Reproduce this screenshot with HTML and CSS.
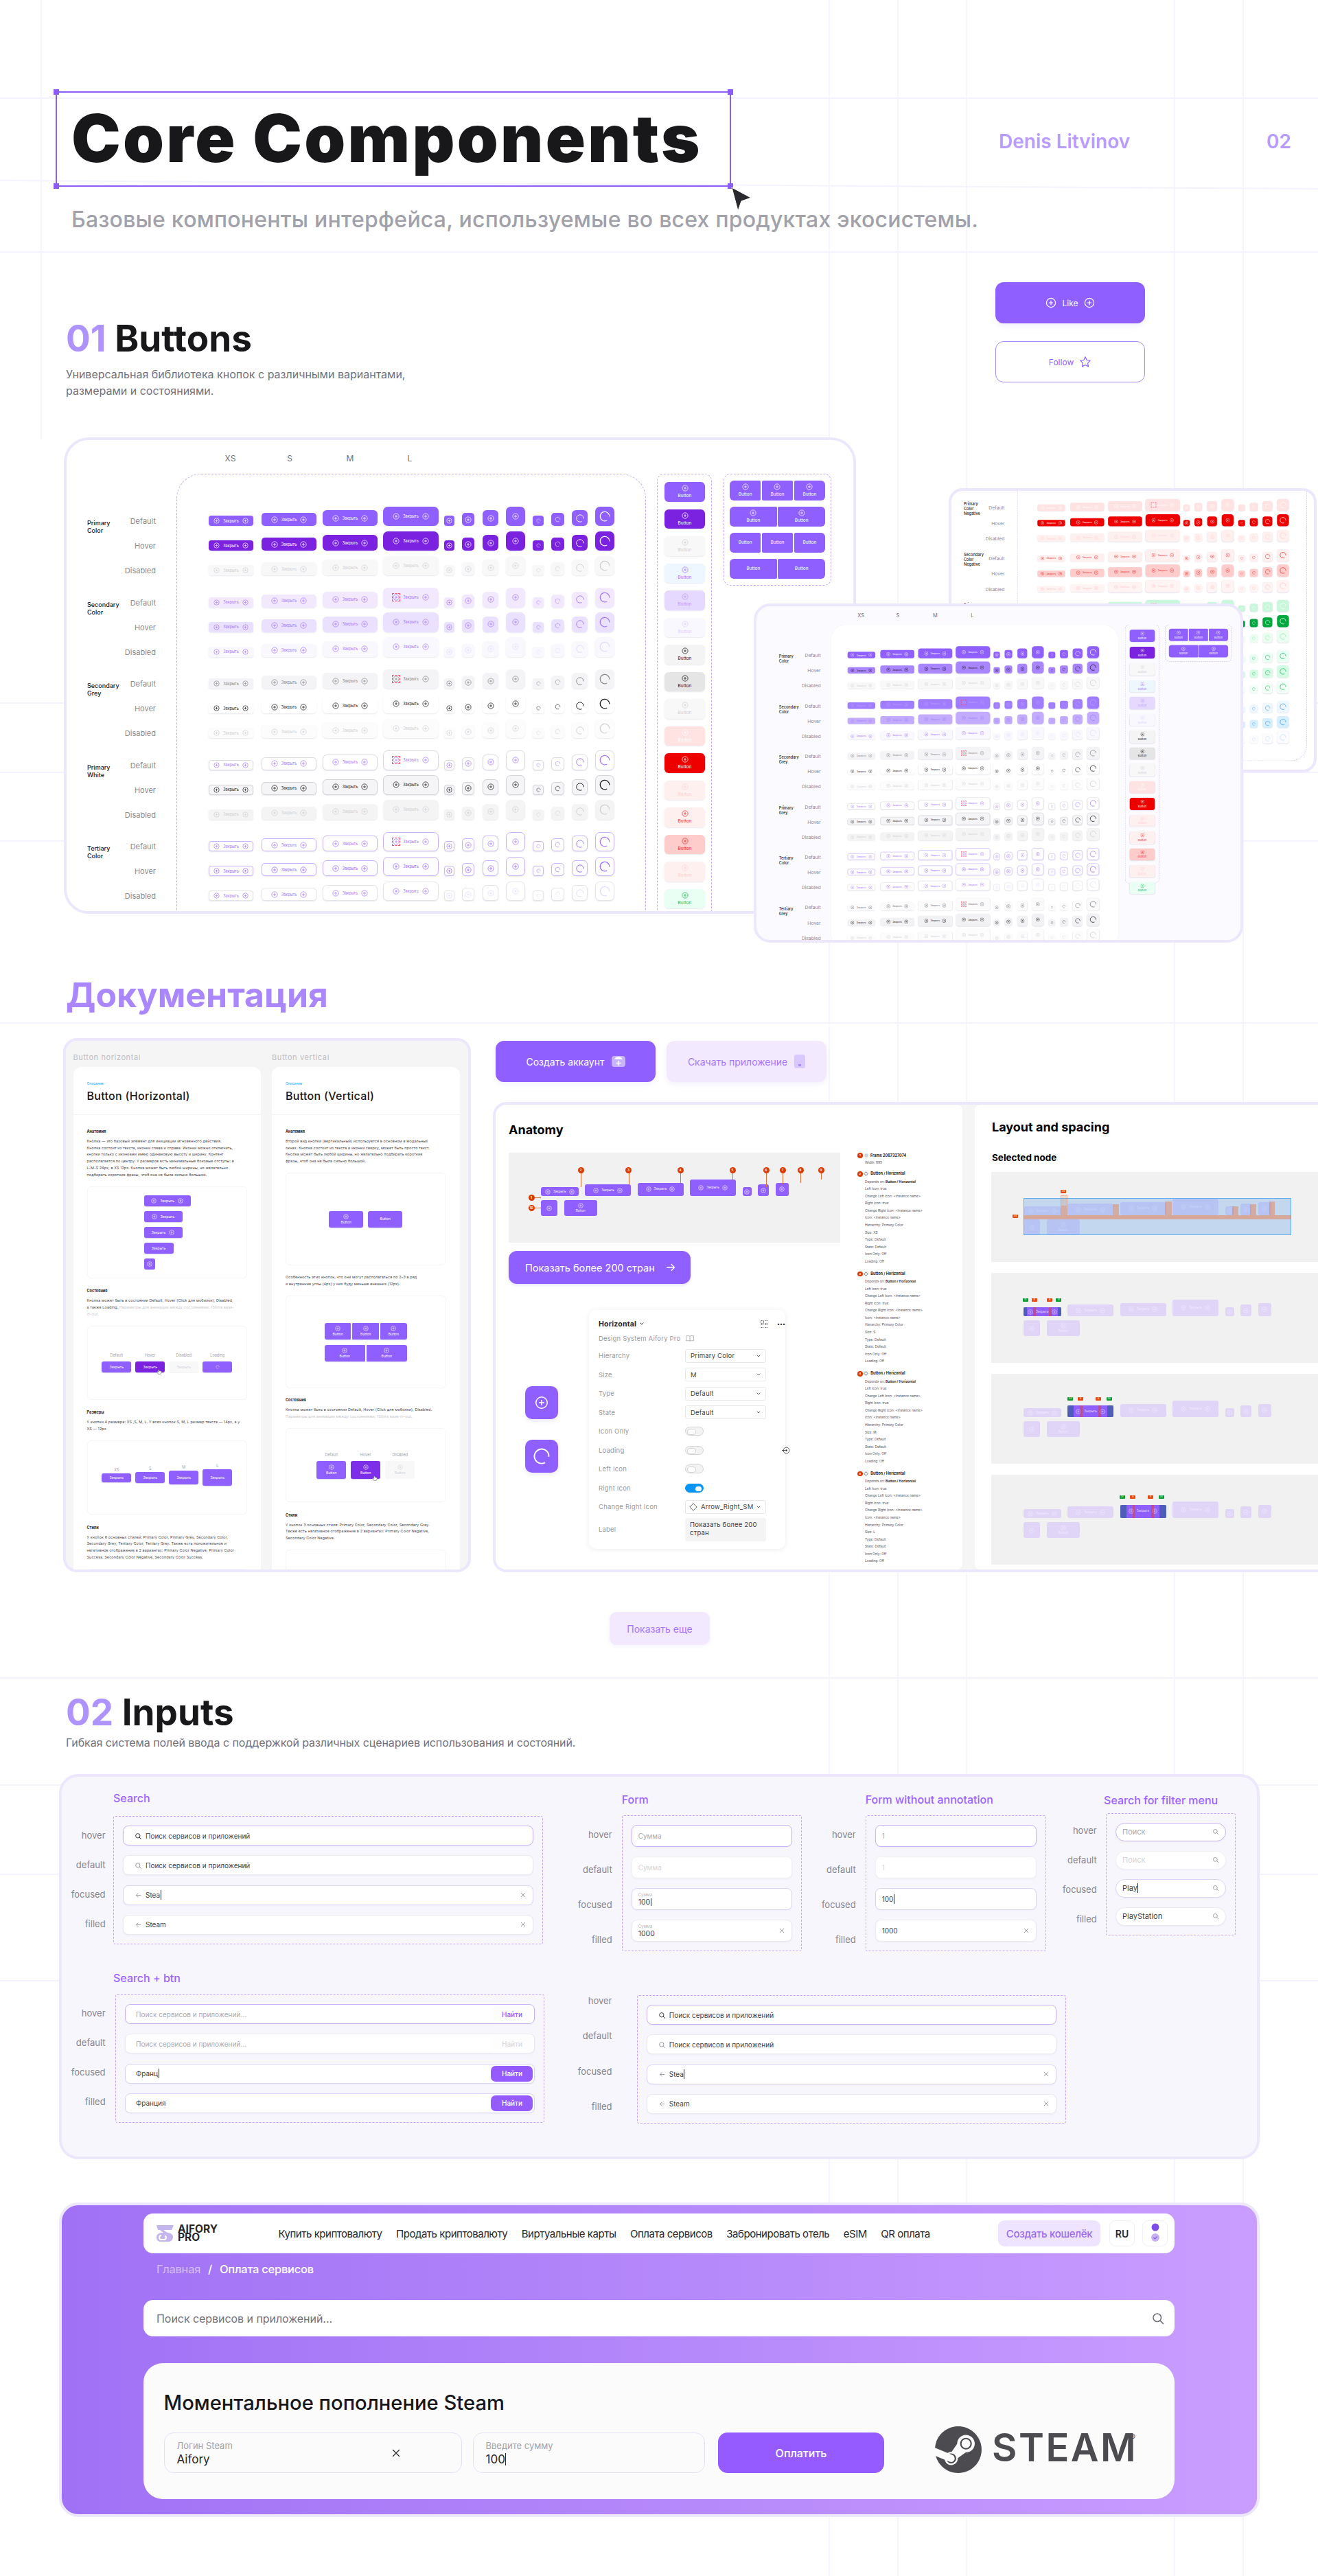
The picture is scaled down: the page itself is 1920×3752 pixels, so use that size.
FILE: index.html

```html
<!DOCTYPE html>
<html lang="en">
<head>
  <meta charset="UTF-8" />
  <meta name="viewport" content="width=device-width, initial-scale=1.0"/>
  <title>Core Components</title>
  <link rel="stylesheet" href="styles.css">
</head>
<body>

  <!-- shared icons -->
  <svg class="defs" aria-hidden="true">
    <symbol id="i-plus" viewBox="0 0 16 16"><circle cx="8" cy="8" r="6.6" fill="none" stroke="currentColor" stroke-width="1.2"/><path d="M8 4.8v6.4M4.8 8h6.4" fill="none" stroke="currentColor" stroke-width="1.2"/></symbol>
    <symbol id="i-load" viewBox="0 0 16 16"><path d="M14 8A6 6 0 1 0 10.500 13.500" fill="none" stroke="currentColor" stroke-width="1.100" stroke-linecap="round"/></symbol>
    <symbol id="i-search" viewBox="0 0 16 16"><circle cx="7" cy="7" r="4.6" fill="none" stroke="currentColor" stroke-width="1.3"/><path d="M10.5 10.5 14 14" fill="none" stroke="currentColor" stroke-width="1.3" stroke-linecap="round"/></symbol>
    <symbol id="i-back" viewBox="0 0 16 16"><path d="M13 8H3.5M7.5 4l-4 4 4 4" fill="none" stroke="currentColor" stroke-width="1.2" stroke-linecap="round" stroke-linejoin="round"/></symbol>
    <symbol id="i-x" viewBox="0 0 16 16"><path d="M3.5 3.5l9 9M12.5 3.5l-9 9" fill="none" stroke="currentColor" stroke-width="1.3" stroke-linecap="round"/></symbol>
    <symbol id="i-chev" viewBox="0 0 8 8"><path d="M2 3l2 2 2-2" fill="none" stroke="currentColor" stroke-width="1" stroke-linecap="round" stroke-linejoin="round"/></symbol>
    <symbol id="i-hand" viewBox="0 0 8 8"><path d="M2.6 1v3.4L1.4 3.6.8 4.2 2.6 7.4h3.6l1-2.4V3.2L4 2.6V1z" fill="#f5f5f5" stroke="#555" stroke-width=".5"/></symbol>
  </svg>

  <svg class="grid-lines" viewBox="0 0 1920 3752" aria-hidden="true">
    <path class="h" d="M0 143H1920M0 263 1920 275M0 367H1920M0 1024H1920M0 1125H1920M0 1225H1920M0 1490H1920M0 2444H1920M0 2600H1920M0 2730H1920M0 2885H1920"/>
    <path class="v" d="M60 0V640M1208 0V3752M1308 0V3752M1408 0V3752M1711 0V3752M1811 0V3752"/>
  </svg>

  <div class="page">

    <header class="top">
      <div class="select-box">
        <i class="handle tl"></i><i class="handle tr"></i><i class="handle bl"></i><i class="handle br"></i>
        <h1>Core Components</h1>
        <svg class="cursor" width="30" height="36" viewBox="0 0 30 36"><path d="M1 1 29 16 15 21 10 35Z" fill="#2a2a2e" stroke="#fff" stroke-width="1"/></svg>
      </div>
      <div class="author">Denis Litvinov</div>
      <div class="page-no">02</div>
    </header>
    <p class="subtitle">Базовые компоненты интерфейса, используемые во всех продуктах экосистемы.</p>

    <section class="buttons-intro">
      <div class="intro-text">
        <h2 class="sec-title"><span>01</span> Buttons</h2>
        <p>Универсальная библиотека кнопок с различными вариантами,<br>размерами и состояниями.</p>
      </div>
      <div class="demo-btns">
        <div class="demo-like"><svg class="ic16"><use href="#i-plus"/></svg>Like<svg class="ic16"><use href="#i-plus"/></svg></div>
        <div class="demo-follow">Follow
          <svg width="18" height="18" viewBox="0 0 18 18"><path d="M9 1.8l2.2 4.7 5 .7-3.6 3.6.9 5.1L9 13.5l-4.5 2.4.9-5.1L1.8 7.2l5-.7z" fill="none" stroke="currentColor" stroke-width="1.2" stroke-linejoin="round"/></svg>
        </div>
      </div>
    </section>

    <!-- the three overlapping sheets are filled by script.js -->
    <section class="sheets">
      <div class="sheet sheet-a" id="sheetA"></div>
      <div class="sheet sheet-b" id="sheetB"></div>
      <div class="sheet sheet-c" id="sheetC"></div>
    </section>

    <h2 class="doc-title">Документация</h2>

    <section class="doc-row">
      <div class="doc-wrap">
        <div class="doc-col">
          <div class="doc-cap">Button horizontal</div>
          <div class="doc-card">
            <div class="doc-head"><small>Описание</small><h3>Button (Horizontal)</h3></div>
            <div class="doc-body">
              <h4>Анатомия</h4>
              <p>Кнопка — это базовый элемент для инициации мгновенного действия.<br>Кнопка состоит из текста, иконки слева и справа. Иконки можно отключить,<br>кнопки только с иконками имею одинаковую высоту и ширину. Контент<br>располагается по центру. У размеров есть минимальные боковые отступы: в<br>L-M-S 24px, в XS 12px. Кнопка может быть любой ширины, но желательно<br>подбирать короткие фразы, чтоб она не была сильно большой.</p>
              <div class="doc-box box-anat">
                <div class="pb w68"><svg class="ic8"><use href="#i-plus"/></svg>Закрыть<svg class="ic8"><use href="#i-plus"/></svg></div>
                <div class="pb w56"><svg class="ic8"><use href="#i-plus"/></svg>Закрыть</div>
                <div class="pb w56">Закрыть<svg class="ic8"><use href="#i-plus"/></svg></div>
                <div class="pb w43">Закрыть</div>
                <div class="pb w16"><svg class="ic8"><use href="#i-plus"/></svg></div>
              </div>
              <h4>Состояния</h4>
              <p>Кнопка может быть в состоянии Default, Hover (Click для мобилки), Disabled,<br>а также Loading. <span class="muted">Параметры для анимации между состояниями: 150ms ease-<br>in-out.</span></p>
              <div class="doc-box box-row h108">
                <div class="st"><span>Default</span><div class="pb w43">Закрыть</div></div>
                <div class="st"><span>Hover</span><div class="pb w43 dark">Закрыть<svg class="hand"><use href="#i-hand"/></svg></div></div>
                <div class="st"><span>Disabled</span><div class="pb w43 dis">Закрыть</div></div>
                <div class="st"><span>Loading</span><div class="pb w43"><svg class="ic6"><use href="#i-load"/></svg></div></div>
              </div>
              <h4>Размеры</h4>
              <p>У кнопки 4 размера: XS ,S, M, L. У всех кнопок S, M, L размер текста — 14px, а у<br>XS — 12px</p>
              <div class="doc-box box-row h108">
                <div class="sz"><span>XS</span><div class="pb w43 h13">Закрыть</div></div>
                <div class="sz"><span>S</span><div class="pb w43">Закрыть</div></div>
                <div class="sz"><span>M</span><div class="pb w43 h19">Закрыть</div></div>
                <div class="sz"><span>L</span><div class="pb w43 h24">Закрыть</div></div>
              </div>
              <h4>Стили</h4>
              <p>У кнопок 6 основных стилей: Primary Color, Primary Grey, Secondary Color,<br>Secondary Grey, Tertiary Color, Tertiary Grey. Также есть положительное и<br>негативное отображение в 2 вариантах: Primary Color Negative, Primary Color<br>Success, Secondary Color Negative, Secondary Color Success.</p>
              <div class="doc-box h108"></div>
            </div>
          </div>
        </div>
        <div class="doc-col">
          <div class="doc-cap">Button vertical</div>
          <div class="doc-card">
            <div class="doc-head"><small>Описание</small><h3>Button (Vertical)</h3></div>
            <div class="doc-body">
              <h4>Анатомия</h4>
              <p>Второй вид кнопки (вертикальный) используется в основном в модальных<br>окнах. Кнопка состоит из текста и иконки сверху, может быть просто текст.<br>Кнопка может быть любой ширины, но желательно подбирать короткие<br>фразы, чтоб она не была сильно большой.</p>
              <div class="doc-box box-row h135">
                <div class="pv w50"><svg class="ic8"><use href="#i-plus"/></svg>Button</div>
                <div class="pv w50">Button</div>
              </div>
              <p class="solo">Особенность этих кнопок, что они могут располагаться по 2–3 в ряд<br>и внутренние углы (4px) у них буду меньше внешних (12px).</p>
              <div class="doc-box box-stack h135">
                <div class="pv-row">
                  <div class="pv g-first"><svg class="ic8"><use href="#i-plus"/></svg>Button</div>
                  <div class="pv g-mid"><svg class="ic8"><use href="#i-plus"/></svg>Button</div>
                  <div class="pv g-last"><svg class="ic8"><use href="#i-plus"/></svg>Button</div>
                </div>
                <div class="pv-row">
                  <div class="pv g-first"><svg class="ic8"><use href="#i-plus"/></svg>Button</div>
                  <div class="pv g-last"><svg class="ic8"><use href="#i-plus"/></svg>Button</div>
                </div>
              </div>
              <h4>Состояния</h4>
              <p>Кнопка может быть в состоянии Default, Hover (Click для мобилки), Disabled.<br><span class="muted">Параметры для анимации между состояниями: 150ms ease-in-out.</span></p>
              <div class="doc-box box-row h108 gap7">
                <div class="st"><span>Default</span><div class="pv w43"><svg class="ic8"><use href="#i-plus"/></svg>Button</div></div>
                <div class="st"><span>Hover</span><div class="pv w43 dark"><svg class="ic8"><use href="#i-plus"/></svg>Button<svg class="hand"><use href="#i-hand"/></svg></div></div>
                <div class="st"><span>Disabled</span><div class="pv w43 dis"><svg class="ic8"><use href="#i-plus"/></svg>Button</div></div>
              </div>
              <h4>Стили</h4>
              <p>У кнопок 3 основных стиля: Primary Color, Secondary Color, Secondary Grey.<br>Также есть негативное отображение в 2 вариантах: Primary Color Negative,<br>Secondary Color Negative.</p>
              <div class="doc-box h108"></div>
            </div>
          </div>
        </div>
      </div>

      <div class="doc-right">
        <div class="cta-row">
          <div class="cta cta-main">Создать аккаунт
            <svg width="20" height="20" viewBox="0 0 20 20"><rect x="0" y="2" width="20" height="16" rx="4" fill="#c9b3ff"/><path d="M4 7c1.5-4 9-6 12 0" fill="#fff"/><path d="M10 9v7M6.5 12.5h7" stroke="#fff" stroke-width="1.5"/></svg>
          </div>
          <div class="cta cta-soft">Скачать приложение
            <svg width="16" height="20" viewBox="0 0 16 20"><rect x="0" y="0" width="16" height="20" rx="3" fill="#d9c8ff"/><rect x="6" y="14" width="4" height="2.6" rx="1" fill="#a27dff"/></svg>
          </div>
        </div>
        <div class="anat-wrap">
          <div class="anat-panel">
            <div class="anat-main">
              <h3 class="panel-title">Anatomy</h3>
              <div class="gray-box" id="anatBox"></div>
              <div class="show-200">Показать более 200 стран
                <svg width="14" height="14" viewBox="0 0 14 14"><path d="M1.5 7h11M8 2.5 12.5 7 8 11.5" fill="none" stroke="#fff" stroke-width="1.3" stroke-linecap="round" stroke-linejoin="round"/></svg>
              </div>
              <div class="anat-lower">
                <div class="big-icons">
                  <div class="big-ic"><svg width="20" height="20"><use href="#i-plus"/></svg></div>
                  <div class="big-ic"><svg width="28" height="28"><use href="#i-load"/></svg></div>
                </div>
                <div class="props">
                  <div class="props-head"><b>Horizontal</b><svg class="ic8"><use href="#i-chev"/></svg>
                    <svg class="props-grid" width="11" height="11" viewBox="0 0 11 11"><path d="M.5.5h4v4h-4zM6.500.5h4M6.500 4.500h4M.5 6.500h4M.5 10.500h4M6.500 6.500h4M6.500 10.500h4" fill="none" stroke="#555" stroke-width=".8" stroke-dasharray="1.5 .6"/></svg>
                    <span class="props-dots">•••</span>
                  </div>
                  <div class="props-sub">Design System Aifory Pro
                    <svg width="12" height="9" viewBox="0 0 12 9"><path d="M6 1.200C5 .5 2.500.5.500.8v7c2-.3 4.500-.3 5.500.4 1-.7 3.500-.7 5.500-.4v-7C9.500.5 7 .5 6 1.200zM6 1.200v7" fill="none" stroke="#888" stroke-width=".6"/></svg>
                  </div>
                  <div class="prop"><label>Hierarchy</label><div class="dd">Primary Color<svg class="ic8"><use href="#i-chev"/></svg></div></div>
                  <div class="prop"><label>Size</label><div class="dd">M<svg class="ic8"><use href="#i-chev"/></svg></div></div>
                  <div class="prop"><label>Type</label><div class="dd">Default<svg class="ic8"><use href="#i-chev"/></svg></div></div>
                  <div class="prop"><label>State</label><div class="dd">Default<svg class="ic8"><use href="#i-chev"/></svg></div></div>
                  <div class="prop"><label>Icon Only</label><i class="tg"></i></div>
                  <div class="prop"><label>Loading</label><i class="tg"></i>
                    <svg class="prop-target" width="12" height="11" viewBox="0 0 12 11"><circle cx="6.500" cy="5.500" r="4.400" fill="none" stroke="#333" stroke-width=".8"/><circle cx="6.500" cy="5.500" r="1.200" fill="#333"/><path d="M0 5.500h5" stroke="#333" stroke-width=".8"/></svg>
                  </div>
                  <div class="prop"><label>Left Icon</label><i class="tg"></i></div>
                  <div class="prop"><label>Right Icon</label><i class="tg on"></i></div>
                  <div class="prop"><label>Change Right Icon</label><div class="dd"><span class="dd-val"><svg width="12" height="12" viewBox="0 0 12 12"><path d="M6 .8 11.200 6 6 11.200.8 6z" fill="none" stroke="#333" stroke-width=".8"/></svg>Arrow_Right_SM</span><svg class="ic8"><use href="#i-chev"/></svg></div></div>
                  <div class="prop prop-label"><label>Label</label><div class="ta">Показать более 200<br>стран</div></div>
                </div>
              </div>
            </div>
            <div class="node-list" id="nodeList"></div>
          </div>
          <div class="layout-panel">
            <h3 class="panel-title">Layout and spacing</h3>
            <h4 class="sel-title">Selected node</h4>
            <div class="gray-box layout-box" id="layoutA"></div>
            <div class="gray-box layout-box" id="layoutB"></div>
            <div class="gray-box layout-box" id="layoutC"></div>
            <div class="gray-box layout-box" id="layoutD"></div>
          </div>
        </div>
      </div>
    </section>

    <div class="show-more">Показать еще</div>

    <section class="inputs-intro">
      <h2 class="sec-title"><span>02</span> Inputs</h2>
      <p>Гибкая система полей ввода с поддержкой различных сценариев использования и состояний.</p>
    </section>

    <section class="inputs-card">
      <div class="inputs-row row-top">
        <div class="ig ig-search">
          <div></div><h5>Search</h5>
          <div class="st-labels"><span>hover</span><span>default</span><span>focused</span><span>filled</span></div>
          <div class="dash-panel stack-29">
            <div class="fld hov"><svg class="fi dk"><use href="#i-search"/></svg>Поиск сервисов и приложений</div>
            <div class="fld"><svg class="fi"><use href="#i-search"/></svg>Поиск сервисов и приложений</div>
            <div class="fld foc"><svg class="fi"><use href="#i-back"/></svg>Stea<i class="caret"></i><svg class="fx"><use href="#i-x"/></svg></div>
            <div class="fld"><svg class="fi"><use href="#i-back"/></svg>Steam<svg class="fx"><use href="#i-x"/></svg></div>
          </div>
        </div>
        <div class="ig ig-form">
          <div></div><h5>Form</h5>
          <div class="st-labels wide"><span>hover</span><span>default</span><span>focused</span><span>filled</span></div>
          <div class="dash-panel stack-32">
            <div class="fld hov ph">Сумма</div>
            <div class="fld ph lite">Сумма</div>
            <div class="fld foc two"><small>Сумма</small><span>100<i class="caret"></i></span></div>
            <div class="fld two"><small>Сумма</small><span>1000</span><svg class="fx"><use href="#i-x"/></svg></div>
          </div>
        </div>
        <div class="ig ig-form2">
          <div></div><h5>Form without annotation</h5>
          <div class="st-labels wide"><span>hover</span><span>default</span><span>focused</span><span>filled</span></div>
          <div class="dash-panel stack-32">
            <div class="fld hov ph">1</div>
            <div class="fld ph lite">1</div>
            <div class="fld foc">100<i class="caret"></i></div>
            <div class="fld">1000<svg class="fx"><use href="#i-x"/></svg></div>
          </div>
        </div>
        <div class="ig ig-filter">
          <div></div><h5>Search for filter menu</h5>
          <div class="st-labels filter"><span>hover</span><span>default</span><span>focused</span><span>filled</span></div>
          <div class="dash-panel stack-pill">
            <div class="fld pill hov ph">Поиск<svg class="fx"><use href="#i-search"/></svg></div>
            <div class="fld pill ph lite">Поиск<svg class="fx"><use href="#i-search"/></svg></div>
            <div class="fld pill foc">Play<i class="caret"></i><svg class="fx"><use href="#i-search"/></svg></div>
            <div class="fld pill">PlayStation<svg class="fx"><use href="#i-search"/></svg></div>
          </div>
        </div>
      </div>
      <div class="inputs-row">
        <div class="ig ig-btn">
          <div></div><h5>Search + btn</h5>
          <div class="st-labels"><span>hover</span><span>default</span><span>focused</span><span>filled</span></div>
          <div class="dash-panel stack-29">
            <div class="fld hov ph pad-btn">Поиск сервисов и приложений...<b class="find ghost">Найти</b></div>
            <div class="fld ph pad-btn">Поиск сервисов и приложений...<b class="find ghost off">Найти</b></div>
            <div class="fld foc pad-btn">Франц<i class="caret"></i><b class="find">Найти</b></div>
            <div class="fld foc pad-btn">Франция<b class="find">Найти</b></div>
          </div>
        </div>
        <div class="ig ig-plain">
          <div class="st-labels top0"><span>hover</span><span>default</span><span>focused</span><span>filled</span></div>
          <div class="dash-panel stack-29">
            <div class="fld hov"><svg class="fi dk"><use href="#i-search"/></svg>Поиск сервисов и приложений</div>
            <div class="fld"><svg class="fi"><use href="#i-search"/></svg>Поиск сервисов и приложений</div>
            <div class="fld foc"><svg class="fi"><use href="#i-back"/></svg>Stea<i class="caret"></i><svg class="fx"><use href="#i-x"/></svg></div>
            <div class="fld"><svg class="fi"><use href="#i-back"/></svg>Steam<svg class="fx"><use href="#i-x"/></svg></div>
          </div>
        </div>
      </div>
    </section>

    <section class="hero">
      <nav class="hero-nav">
        <div class="logo">
          <svg width="25" height="26" viewBox="0 0 25 26"><path d="M0 1h25l-3 7H10l6 4c5 0 8 3 8 6 0 5-4 8-9 7H7c-4 0-7-2-7-6 0-5 4-7 8-7h2L5 8H2z" fill="#c5b5ee"/><path d="M7 16c-2 0-3 1-3 3s1 3 3 3h4c2 0 3-1 3-3 0-1-1-2-2-2" fill="none" stroke="#fff" stroke-width="2"/></svg>
          <b>AIFORY<br>PRO</b>
        </div>
        <a>Купить криптовалюту</a>
        <a>Продать криптовалюту</a>
        <a>Виртуальные карты</a>
        <a>Оплата сервисов</a>
        <a>Забронировать отель</a>
        <a>eSIM</a>
        <a>QR оплата</a>
        <div class="wallet">Создать кошелёк</div>
        <div class="nav-sq">RU</div>
        <div class="nav-sq">
          <svg width="16" height="32" viewBox="0 0 16 32"><circle cx="8" cy="7" r="5.500" fill="#7d4ee6"/><circle cx="8" cy="22" r="6" fill="#c6b2f2"/><path d="M5.500 22l2 2 3-3.500" fill="none" stroke="#7d4ee6" stroke-width="1.100"/></svg>
        </div>
      </nav>
      <div class="crumbs"><span>Главная</span><b>/</b><em>Оплата сервисов</em></div>
      <div class="hero-search">Поиск сервисов и приложений...<svg width="20" height="20"><use href="#i-search"/></svg></div>
      <div class="hero-card">
        <h3>Моментальное пополнение Steam</h3>
        <div class="pay-row">
          <div class="pay-fld f-login"><small>Логин Steam</small><span>Aifory</span><svg class="pay-x" width="16" height="16"><use href="#i-x"/></svg></div>
          <div class="pay-fld f-sum"><small>Введите сумму</small><span>100<i class="caret"></i></span></div>
          <div class="pay-btn">Оплатить</div>
          <div class="steam">
            <svg width="68" height="68" viewBox="0 0 24 24"><path fill="#4b4b50" d="M11.979 0C5.678 0 .511 4.86.022 11.037l6.432 2.658c.545-.371 1.203-.59 1.912-.59.063 0 .125.004.188.006l2.861-4.142V8.91c0-2.495 2.028-4.524 4.524-4.524 2.494 0 4.524 2.031 4.524 4.527s-2.03 4.525-4.524 4.525h-.105l-4.076 2.911c0 .052.004.105.004.159 0 1.875-1.515 3.396-3.39 3.396-1.635 0-3.016-1.173-3.331-2.727L.436 15.27C1.862 20.307 6.486 24 11.979 24c6.627 0 11.999-5.373 11.999-12S18.605 0 11.979 0zM7.54 18.21l-1.473-.61c.262.543.714.999 1.314 1.25 1.297.539 2.793-.076 3.332-1.375.263-.63.264-1.319.005-1.949s-.75-1.121-1.377-1.383c-.624-.26-1.29-.249-1.878-.03l1.523.63c.956.4 1.409 1.5 1.009 2.455-.397.957-1.497 1.41-2.454 1.012H7.54zm11.415-9.303c0-1.662-1.353-3.015-3.015-3.015-1.665 0-3.015 1.353-3.015 3.015 0 1.665 1.35 3.015 3.015 3.015 1.663 0 3.015-1.35 3.015-3.015zm-5.273-.005c0-1.252 1.013-2.266 2.265-2.266 1.249 0 2.266 1.014 2.266 2.266 0 1.251-1.017 2.265-2.266 2.265-1.253 0-2.265-1.014-2.265-2.265z"/></svg>
            <b>STEAM</b><sup>®</sup>
          </div>
        </div>
      </div>
    </section>

  </div>

  <script src="script.js"></script>
</body>
</html>
```

FILE: styles.css

```css
* { box-sizing: border-box; }
body {
  margin: 0;
  width: 1920px;
  height: 3752px;
  overflow: hidden;
  position: relative;
  background: #fff;
  color: #18181b;
  font-family: Inter, "Noto Sans", sans-serif;
}
h1, h2, h3, h4, h5, p { margin: 0; }
.defs { position: absolute; width: 0; height: 0; }
.grid-lines { position: absolute; left: 0; top: 0; width: 1920px; height: 3752px; }
.grid-lines path { fill: none; }
.grid-lines .h { stroke: #f4f2ff; stroke-width: 2; }
.grid-lines .v { stroke: #f4f2ff; stroke-width: 1.5; }
.page { position: relative; }

.ic8 { width: 8px; height: 8px; flex: none; }
.ic6 { width: 6px; height: 6px; flex: none; }
.ic16 { width: 16px; height: 16px; flex: none; }

/* top */
.top { display: flex; padding: 133px 0 0 81px; height: 272px; }
.select-box {
  position: relative;
  width: 984px;
  height: 139px;
  border: 2px solid #8b5cf6;
  padding-left: 21px;
  display: flex;
  align-items: center;
}
.select-box h1 {
  font-size: 96px;
  font-weight: 900;
  line-height: 1;
  letter-spacing: 3.3px;
  white-space: nowrap;
  margin-top: -4px;
}
.handle { position: absolute; width: 8px; height: 8px; background: #8b5cf6; }
.handle.tl { left: -5px; top: -5px; }
.handle.tr { right: -5px; top: -5px; }
.handle.bl { left: -5px; bottom: -5px; }
.handle.br { right: -5px; bottom: -5px; }
.cursor { position: absolute; left: 982px; top: 137px; }
.author {
  margin: 56px 0 0 390px;
  width: 390px;
  font-size: 28px;
  line-height: 34px;
  font-weight: 600;
  color: #b79bff;
}
.page-no { margin-top: 56px; font-size: 28px; line-height: 34px; font-weight: 600; color: #b79bff; }
.subtitle {
  margin: 28px 0 0 104px;
  font-size: 32px;
  line-height: 40px;
  font-weight: 500;
  color: #a1a1aa;
  white-space: nowrap;
  letter-spacing: .22px;
}

/* buttons intro */
.buttons-intro { display: flex; justify-content: space-between; height: 296px; padding: 71px 252px 0 96px; }
.intro-text { padding-top: 52px; }
.sec-title { font-size: 53px; line-height: 60px; font-weight: 700; color: #18181b; white-space: nowrap; }
.sec-title span { color: #ae93ff; }
.intro-text p { margin-top: 10px; font-size: 16px; line-height: 24px; color: #71717a; }
.demo-btns { display: flex; flex-direction: column; gap: 26px; }
.demo-like, .demo-follow {
  width: 218px;
  height: 60px;
  border-radius: 12px;
  display: flex;
  align-items: center;
  justify-content: center;
  gap: 8px;
  font-size: 12px;
}
.demo-like { background: #8f5fff; color: #fff; box-shadow: 0 4px 8px rgba(90,50,200,.08); }
.demo-follow { border: 1.5px solid #a78bfa; background: #fff; color: #8f5fff; }

/* sheets */
.sheets { position: relative; height: 789px; margin-top: 1px; }
.sheet {
  position: absolute;
  border: 4px solid #ede7fd;
  border-radius: 36px;
  overflow: hidden;
  background: #fff;
}
.sheet-a { left: 93px; top: 0; width: 1154px; height: 694px; }
.sheet-b { left: 1382px; top: 74px; width: 536px; height: 414px; background: #fff; border-radius: 20px; }
.sheet-c { left: 1098px; top: 242px; width: 713px; height: 494px; background: #fbfbff; border-radius: 24px; }
.sheet-in { width: 1200px; transform-origin: 0 0; }
.sheet-b .sheet-in, .sheet-c .sheet-in { transform: scale(.62); }
.sheet-head { display: flex; height: 49px; padding: 20px 0 0 206px; font-size: 12px; line-height: 14px; color: #71717a; }
.sheet-head span { text-align: center; }
.sheet-head span:nth-child(1) { width: 65px; margin-right: 24px; }
.sheet-head span:nth-child(2) { width: 60px; margin-right: 28px; }
.sheet-head span:nth-child(3) { width: 60px; margin-right: 27px; }
.sheet-head span:nth-child(4) { width: 60px; }
.sheet-body { display: flex; align-items: flex-start; }
.labels { width: 160px; padding: 39px 30px 0 30px; flex: none; }
.lab-group { display: flex; justify-content: space-between; height: 108px; margin-bottom: 10.5px; }
.lab-name { font-size: 9px; line-height: 11px; padding-top: 27px; color: #18181b; font-weight: 500; }
.lab-states div { height: 36px; display: flex; justify-content: flex-end; align-items: flex-end; font-size: 11px; line-height: 12px; color: #8a8a90; }
.panel-m {
  width: 684px;
  padding: 39px 0 0 46px;
  height: 760px;
  border: 1px dashed #c4a8ff;
  border-radius: 36px;
  flex: none;
}
.panel-v { width: 80px; height: 760px; margin-left: 16px; padding: 11px 0 0 10px; border: 1px dashed #c4a8ff; border-radius: 10px; flex: none; }
.panel-g { width: 157px; margin-left: 17px; padding: 9px 8px 9px; border: 1px dashed #c4a8ff; border-radius: 10px; flex: none; }
.m-group { margin-bottom: 10.5px; }
.m-row {
  display: grid;
  grid-template-columns: 77px 89px 88px 89px 26px 30px 34px 39px 27px 30px 34px 28px;
  height: 36px;
  align-items: end;
}

.mb {
  position: relative;
  display: flex;
  align-items: center;
  justify-content: center;
  gap: 5px;
  font-size: 5.5px;
  white-space: nowrap;
  box-shadow: 0 1px 2px rgba(40,20,90,.1);
}
.mb svg { flex: none; }
.mb.xs { width: 65px; height: 15px; border-radius: 4px; }
.mb.s { width: 80px; height: 19px; border-radius: 5px; }
.mb.m { width: 80px; height: 23px; border-radius: 6px; }
.mb.l { width: 81px; height: 28.5px; border-radius: 7px; }
.mb.xs svg { width: 9px; height: 9px; }
.mb.s svg, .mb.m svg, .mb.l svg { width: 10px; height: 10px; }
.mb.only.xs { width: 15px; }
.mb.only.s { width: 18px; }
.mb.only.m { width: 23px; }
.mb.only.l { width: 28px; }
.mb.spin.xs { width: 16px; }
.mb.spin.s { width: 19px; }
.mb.spin.m { width: 23px; }
.mb.spin.l { width: 28px; }
.mb.spin.xs svg { width: 7px; height: 7px; }
.mb.spin.s svg { width: 9px; height: 9px; }
.mb.spin.m svg { width: 14px; height: 14px; }
.mb.spin.l svg { width: 18px; height: 18px; }
.mb .mark { outline: .5px dashed #ff4d6a; outline-offset: .5px; }

.v-pri { background: #8f5fff; color: #fff; }
.v-pri-h { background: #7a22e0; color: #fff; }
.v-pri-h2 { background: #a985ff; color: #18181b; }
.v-off { background: #f8f8f9; color: #cfcfd4; }
.v-sec { background: #f3e9ff; color: #a675ff; }
.v-sec-h { background: #e9e1ff; color: #a675ff; }
.v-sec-off { background: #faf8ff; color: #a675ff; }
.v-sec-off.only, .v-sec-off.spin { color: #e3d9ff; }
.v-sec2 { background: #a07cff; color: #bda3ff; }
.v-sec2-h { background: #c3acff; color: #a07cff; }
.v-grey { background: #f4f4f6; color: #85858c; }
.v-grey-h { background: #fff; color: #18181b; }
.v-grey-off { background: #fcfcfc; color: #cfcfd4; }
.v-grey-v { background: #f4f4f5; color: #18181b; }
.v-grey-v2 { background: #e5e5e6; color: #18181b; }
.v-white { background: #fff; color: #a675ff; border: 1px solid #dcdce0; }
.v-white-h { background: #f5f5f8; color: #18181b; border: 1px solid #d4d4d8; }
.v-white-off { background: #f4f4f5; color: #cfcfd4; }
.v-ter { background: #fff; color: #a675ff; border: 1px solid #c9b3ff; }
.v-ter-h { background: #fdfcff; color: #9566ff; border: 1.5px solid #c9b3ff; }
.v-ter-off { background: #fff; color: #a675ff; border: 1px solid #e4e4e7; }
.v-ter-off.only, .v-ter-off.spin { color: #e3d9ff; }
.v-tg { background: #fbfbfc; color: #71717a; }
.v-tg-h { background: #f2f2f4; color: #18181b; }
.v-tg-off { background: #fcfcfd; color: #cfcfd4; }
.v-neg-d { background: #ffe3e3; color: #fff; }
.v-neg { background: #ee0000; color: #fff; }
.v-neg-off { background: #fff0f0; color: #ffd0d0; }
.v-neg2 { background: #fff0f0; color: #ee2b2b; }
.v-neg2-h { background: #ffcccc; color: #ee2b2b; }
.v-neg2-off { background: #fff3f3; color: #ffc5c5; }
.v-suc-d { background: #c9f7dc; color: #fff; }
.v-suc { background: #00a83e; color: #fff; }
.v-suc-off { background: #eafff2; color: #8fe6b0; }
.v-suc2 { background: #eafff3; color: #18b85a; }
.v-suc2-h { background: #d4fbe3; color: #18b85a; }
.v-suc2-off { background: #f1fff6; color: #18b85a; }
.v-inf { background: #eef6ff; color: #3b9cff; }
.v-inf-h { background: #d5efff; color: #3b9cff; }
.v-inf-off { background: #fcfcff; color: #bcdcff; }
.v-inf-v { background: #eef6ff; color: #a675ff; }
.v-sec-v { background: #e5d9ff; color: #b79bff; }
.v-sec-v-off { background: #faf8ff; color: #dccfff; }

.vb {
  width: 59px;
  height: 28.5px;
  margin-bottom: 11px;
  border-radius: 6px;
  display: flex;
  flex-direction: column;
  align-items: center;
  justify-content: center;
  gap: 2px;
  font-size: 6.5px;
  line-height: 8px;
  box-shadow: 0 1px 2px rgba(40,20,90,.1);
}
.vb svg { width: 10px; height: 10px; }
.gb-row { display: flex; gap: 1.5px; height: 28.5px; margin-bottom: 9.5px; }
.gb-row:last-child { margin-bottom: 0; }
.gb {
  flex: 1;
  background: #8f5fff;
  color: #fff;
  display: flex;
  flex-direction: column;
  align-items: center;
  justify-content: center;
  gap: 2px;
  font-size: 6.5px;
  line-height: 8px;
  border-radius: 2px;
}
.gb svg { width: 10px; height: 10px; }
.gb:first-child { border-radius: 6px 2px 2px 6px; }
.gb:last-child { border-radius: 2px 6px 6px 2px; }

/* sheet tweaks for the smaller copies */
.sheet-c .sheet-in { width: 1137px; }
.sheet-c .sheet-head { height: 43px; padding-left: 213px; padding-top: 15px; }
.sheet-c .labels { width: 174px; padding-left: 53px; padding-right: 23px; padding-top: 42px; }
.sheet-c .panel-m { width: 677px; padding: 42px 0 0 39px; border: 1px solid #f3f3f6; background: #fff; border-bottom: 0; }
.sheet-c .panel-v { width: 80px; height: 608px; margin-left: 15px; }
.sheet-c .panel-g { margin-left: 14px; }
.sheet-b .sheet-in { width: 860px; }
.sheet-b .sheet-head { display: none; }
.sheet-b .sheet-body { padding-top: 10px; }
.sheet-b .labels { width: 155px; padding: 0 30px 0 29px; }
.sheet-b .lab-name { padding-top: 15px; }
.sheet-b .panel-m { width: 680px; height: 644px; padding: 0 0 0 46px; margin-top: -20px; padding-top: 20px; border-radius: 0 0 36px 0; }

/* documentation */
.doc-title { margin: 0 0 0 96px; height: 46px; font-size: 50px; line-height: 46px; font-weight: 700; color: #ab87ff; }
.doc-row { display: flex; margin-top: 40px; height: 778px; padding-left: 92px; gap: 32px; }
.doc-wrap {
  width: 594px;
  height: 778px;
  flex: none;
  border: 4px solid #ede7fd;
  border-radius: 20px;
  background: #f5f5f6;
  padding: 0 13px 0 10.5px;
  display: flex;
  gap: 16px;
  overflow: hidden;
}
.doc-col { width: 273.5px; flex: none; }
.doc-cap { height: 38px; padding-top: 17px; font-size: 11px; line-height: 14px; color: #bdbdc2; letter-spacing: .6px; }
.doc-card { background: #fff; border-radius: 12px; height: 760px; }
.doc-head { height: 70px; padding: 20px 20px 0; border-bottom: 1px solid #f3f3f5; }
.doc-head small { display: block; font-size: 5px; line-height: 8px; color: #00a8ff; }
.doc-head h3 { margin-top: 4px; font-size: 16px; line-height: 20px; font-weight: 500; letter-spacing: .3px; }
.doc-body { padding: 20px 20px 0; }
.doc-body h4 { font-size: 5.5px; line-height: 8px; font-weight: 700; color: #27272a; }
.doc-body p { margin: 6px 0 11.5px; font-size: 5.4px; line-height: 9.7px; color: #3f3f46; white-space: nowrap; letter-spacing: .12px; }
.doc-body p.solo { margin-top: 0; }
.muted { color: #c4c4c9; }
.doc-box { border: 1px solid #f5f5f7; border-radius: 6px; margin-bottom: 14.5px; }
.box-anat { height: 134px; display: flex; flex-direction: column; justify-content: center; align-items: flex-start; gap: 7px; padding-left: 82px; }
.h108 { height: 108px; }
.h135 { height: 135px; margin-bottom: 13px; }
.box-row { display: flex; align-items: center; justify-content: center; gap: 6px; }
.box-row.h135 { gap: 7px; }
.gap7 { gap: 7px; }
.box-stack { display: flex; flex-direction: column; align-items: center; justify-content: center; gap: 8px; }
.pb {
  height: 16px;
  background: #8f5fff;
  color: #fff;
  border-radius: 3px;
  display: flex;
  align-items: center;
  justify-content: center;
  gap: 5px;
  font-size: 5px;
  position: relative;
  flex: none;
  box-shadow: 0 1px 1px rgba(60,30,150,.2);
}
.w68 { width: 68.5px; }
.w56 { width: 56px; }
.w43 { width: 43px; }
.w16 { width: 16px; }
.h13 { height: 13px; }
.h19 { height: 19.5px; }
.h24 { height: 24px; }
.pb.dark { background: #7a22e0; }
.pb.dis { background: #f8f8f9; color: #d5d5da; box-shadow: 0 1px 1px rgba(0,0,0,.05); }
.st { display: flex; flex-direction: column; align-items: center; gap: 5px; font-size: 5.5px; line-height: 8px; color: #a1a1aa; }
.sz { position: relative; font-size: 5.5px; line-height: 8px; color: #a1a1aa; }
.sz span { position: absolute; left: 0; right: 0; bottom: calc(100% + 1px); text-align: center; }
.hand { position: absolute; width: 8px; height: 8px; right: 4px; bottom: -3px; }
.pv {
  background: #8f5fff;
  color: #fff;
  height: 24px;
  border-radius: 3px;
  display: flex;
  flex-direction: column;
  align-items: center;
  justify-content: center;
  gap: 1px;
  font-size: 5px;
  line-height: 7px;
  position: relative;
  flex: none;
  box-shadow: 0 1px 1px rgba(60,30,150,.2);
}
.pv.w50 { width: 50px; }
.pv.w43 { height: 26px; }
.pv.dark { background: #7c2ee8; }
.pv.dis { background: #f8f8f9; color: #d5d5da; box-shadow: none; }
.pv-row { display: flex; gap: 2px; width: 120px; }
.pv-row .pv { flex: 1; }
.g-first { border-radius: 3px 1px 1px 3px; }
.g-mid { border-radius: 1px; }
.g-last { border-radius: 1px 3px 3px 1px; }

/* anatomy side */
.doc-right { flex: none; width: 1202px; }
.cta-row { display: flex; gap: 16px; padding: 4px 0 0 4px; height: 93px; }
.cta {
  width: 233px;
  height: 60px;
  border-radius: 12px;
  display: flex;
  align-items: center;
  justify-content: center;
  gap: 10px;
  font-size: 14px;
  box-shadow: 0 3px 8px rgba(90,50,200,.08);
}
.cta-main { background: #8f5fff; color: #fff; }
.cta-soft { background: #f3e9ff; color: #a675ff; }
.anat-wrap {
  display: flex;
  gap: 18px;
  height: 685px;
  border: 4px solid #ede7fd;
  border-right: 0;
  border-radius: 20px 0 0 20px;
  background: #f5f5f6;
}
.anat-panel { width: 680px; flex: none; background: #fff; border-radius: 16px 8px 8px 16px; display: flex; padding-left: 19px; }
.anat-main { width: 483px; flex: none; }
.panel-title { font-size: 18px; line-height: 24px; font-weight: 700; color: #000; }
.anat-main .panel-title { padding-top: 25px; height: 70px; }
.gray-box { background: #f1f1f1; position: relative; }
.anat-main .gray-box { height: 131px; }
.show-200 {
  margin-top: 12px;
  width: 265px;
  height: 48px;
  border-radius: 12px;
  background: #8f5fff;
  color: #fff;
  display: flex;
  align-items: center;
  gap: 16px;
  padding-left: 24px;
  font-size: 14.5px;
  box-shadow: 0 2px 4px rgba(90,50,200,.15);
}
.anat-lower { display: flex; margin-top: 38px; padding-left: 24px; }
.big-icons { width: 48px; flex: none; padding-top: 111px; }
.big-ic {
  width: 48px;
  height: 48px;
  margin-bottom: 30px;
  background: #8f5fff;
  color: #fff;
  border-radius: 10px;
  display: flex;
  align-items: center;
  justify-content: center;
  box-shadow: 0 3px 6px rgba(90,50,200,.1);
}
.props {
  margin-left: 45px;
  width: 286px;
  height: 348px;
  background: #fff;
  border-radius: 10px;
  box-shadow: 0 1px 8px rgba(0,0,0,.08);
  padding: 13px 0 0 14px;
  font-size: 9.5px;
  color: #9a9aa0;
  letter-spacing: .2px;
}
.props-head { display: flex; align-items: center; gap: 4px; height: 14px; color: #27272a; font-size: 10.5px; }
.props-grid { margin-left: 165px; }
.props-dots { margin-left: 9px; font-size: 7px; color: #27272a; letter-spacing: 0; }
.props-sub { display: flex; align-items: center; gap: 8px; height: 14px; margin-top: 7px; margin-bottom: 5px; }
.prop { position: relative; display: flex; align-items: center; height: 27.5px; }
.prop label { width: 126px; flex: none; }
.dd {
  width: 118px;
  height: 20px;
  border: 1px solid #e8e8ea;
  border-radius: 3px;
  display: flex;
  align-items: center;
  justify-content: space-between;
  padding: 0 6px 0 7px;
  color: #3f3f46;
}
.dd svg { color: #666; }
.dd-val { display: flex; align-items: center; gap: 5px; margin-left: -2px; }
.tg { width: 27px; height: 13px; border: 1px solid #d4d4d8; border-radius: 7px; background: #f3f3f4; position: relative; }
.tg::after { content: ""; position: absolute; left: 2px; top: 2px; width: 11px; height: 7px; border-radius: 4px; background: #fff; border: 1px solid #d4d4d8; }
.tg.on { background: #0a94f5; border-color: #0a94f5; }
.tg.on::after { left: 14px; border: 0; top: 3px; width: 9px; }
.prop-target { position: absolute; left: 267px; top: 8px; }
.prop-label { height: 34px; margin-top: 2px; }
.ta { width: 118px; height: 34px; background: #f4f4f5; border-radius: 3px; padding: 4px 7px; line-height: 12px; color: #3f3f46; }

.node-list { margin-left: 25px; padding-top: 69px; font-size: 4.8px; line-height: 10.56px; color: #52525b; white-space: nowrap; }
.node { position: relative; padding-left: 11px; margin-bottom: 6.8px; }
.node-head { height: 12px; font-size: 5.5px; font-weight: 700; color: #27272a; display: flex; align-items: center; gap: 3px; margin-left: -1px; }
.node-head i { width: 5px; height: 5px; border: .6px solid #999; transform: rotate(45deg); }
.node-head svg { flex: none; }
.node-dot {
  position: absolute;
  left: 0;
  top: 2.5px;
  width: 7.5px;
  height: 7.5px;
  border-radius: 50%;
  background: #dc3a00;
  color: #fff;
  font-size: 4px;
  line-height: 7.5px;
  text-align: center;
  font-weight: 700;
}
.node b { color: #27272a; }

.layout-panel { flex: 1; background: #fff; border-radius: 8px 0 0 8px; padding-left: 25px; overflow: hidden; }
.layout-panel .panel-title { padding-top: 21px; height: 56px; }
.sel-title { font-size: 13.5px; line-height: 18px; font-weight: 700; color: #000; margin-top: 12px; height: 30px; }
.layout-box { height: 131px; margin-bottom: 16px; margin-left: -1px; }

/* anatomy row, also drawn ghosted in the layout boxes */
.a-row { position: absolute; left: 47px; top: 39px; display: flex; align-items: flex-end; gap: 9.5px; }
.a-row2 { position: absolute; left: 47px; top: 69px; display: flex; gap: 9.5px; }
.ab {
  position: relative;
  background: #8f5fff;
  color: #fff;
  border-radius: 3px;
  display: flex;
  align-items: center;
  justify-content: center;
  gap: 4px;
  font-size: 4.5px;
  line-height: 6px;
  flex: none;
}
.ab svg { width: 8px; height: 8px; }
.ab.col { flex-direction: column; gap: 1px; }
.ghost-btns .ab { background: #e0d4f7; color: #f2ecff; }
.ghost-btns .ab.sel { background: #8f5fff; color: #e8deff; }
.ab1 { width: 54.5px; height: 13px; }
.ab2 { width: 67px; height: 17px; }
.ab3 { width: 67px; height: 19.4px; }
.ab4 { width: 67px; height: 24px; }
.ab5 { width: 13px; height: 13px; }
.ab6 { width: 16px; height: 17px; }
.ab7 { width: 19px; height: 19.4px; }
.ab8 { width: 24px; height: 23px; }
.ab9 { width: 48.5px; height: 23px; }
.dot {
  position: absolute;
  width: 9px;
  height: 9px;
  margin: -4.5px 0 0 -4.5px;
  border-radius: 50%;
  background: #dc3a00;
  color: #fff;
  font-size: 4.5px;
  line-height: 9px;
  text-align: center;
  font-weight: 700;
}
.lead { position: absolute; background: #e2703a; }
.ov-blue { position: absolute; left: 47px; top: 38px; width: 390px; height: 54px; background: rgba(90,160,235,.3); border: 1px solid #62aeee; }
.ov-bar { position: absolute; left: 47px; top: 63px; width: 390px; height: 6px; background: rgba(235,110,50,.45); }
.ov-gap { position: absolute; background: rgba(235,110,50,.4); }
.ov-gap.ov-up { background: rgba(235,110,50,.18); border: 1px solid rgba(235,110,50,.3); }
.tag {
  position: absolute;
  height: 5px;
  border-radius: 1px;
  font-size: 3.5px;
  line-height: 5px;
  text-align: center;
  color: #fff;
}
.tag.or { background: #e8480e; width: 8px; }
.tag.gr { background: #0a9a2a; width: 8px; }
.pad-ov { position: absolute; top: 0; bottom: 0; background: rgba(0,90,100,.45); }
.bar-ov { position: absolute; top: 0; bottom: 0; width: 3.7px; background: rgba(230,60,40,.5); }

/* show more */
.show-more {
  width: 146px;
  height: 48px;
  margin: 58px 0 0 888px;
  border-radius: 10px;
  background: #f3e9ff;
  color: #a675ff;
  display: flex;
  align-items: center;
  justify-content: center;
  font-size: 14px;
  box-shadow: 0 2px 6px rgba(90,50,200,.06);
}

/* inputs */
.inputs-intro { padding: 68px 0 0 96px; height: 188px; }
.inputs-intro p { margin-top: 2px; font-size: 16px; line-height: 24px; color: #71717a; white-space: nowrap; letter-spacing: -.08px; }
.inputs-card {
  width: 1749px;
  height: 561px;
  margin-left: 86px;
  border: 4px solid #ede7fd;
  border-radius: 28px;
  background: #f7f6fd;
}
.inputs-row { display: flex; align-items: flex-start; }
.row-top { height: 282.5px; padding-top: 21px; }
.ig { display: grid; flex: none; }
.ig h5 { height: 20px; font-size: 16px; line-height: 20px; font-weight: 500; color: #9b62ff; white-space: nowrap; }
.ig-search { grid-template-columns: 63.6px 626px; column-gap: 11.4px; row-gap: 16px; }
.ig-form { grid-template-columns: 80px 262px; column-gap: 14px; row-gap: 13px; margin-left: 20.7px; padding-top: 2px; }
.ig-form2 { grid-template-columns: 65px 263px; column-gap: 14px; row-gap: 13px; margin-left: 14px; padding-top: 2px; }
.ig-filter { grid-template-columns: 60px 189px; column-gap: 13.4px; row-gap: 9px; margin-left: 14px; padding-top: 3px; }
.ig-filter h5 { margin-left: -3px; }
.ig-btn { grid-template-columns: 63.6px 625.5px; column-gap: 14.4px; row-gap: 14.5px; }
.ig-btn h5 { margin-left: -3px; }
.ig-plain { grid-template-columns: 80px 625px; column-gap: 36.3px; margin-left: 18px; margin-top: 35.5px; }
.st-labels { display: flex; flex-direction: column; gap: 27px; padding-top: 20px; font-size: 13px; line-height: 16px; color: #85858c; text-align: right; }
.st-labels.wide { gap: 35px; }
.st-labels.filter { padding-top: 16.5px; gap: 27.3px; }
.st-labels.top0 { padding-top: 0; gap: 35.3px; }
.ig-btn .st-labels { padding-top: 18.7px; }
.dash-panel { border: 1.5px dashed #c9a2ff; border-radius: 3px; display: flex; flex-direction: column; padding: 13px; }
.stack-29 { gap: 14.3px; }
.stack-32 { gap: 14px; }
.stack-pill { gap: 14.5px; }
.fld {
  position: relative;
  height: 29px;
  background: #fff;
  border: 1px solid #e9e9ee;
  border-radius: 8px;
  display: flex;
  align-items: center;
  padding-left: 32px;
  font-size: 10px;
  color: #3f3f46;
  box-shadow: 0 1px 2px rgba(50,30,100,.05);
  white-space: nowrap;
}
.stack-32 .fld { height: 32px; padding-left: 9px; }
.fld.pill { height: 26.5px; border-radius: 13.5px; padding-left: 9px; font-size: 11px; }
.stack-29 .fld.pad-btn { padding-left: 15px; }
.fld.hov { border-color: #c9b3f7; }
.fld.foc { border-color: #dcd3f8; }
.fld.ph { color: #a9a9b0; }
.fld.lite { color: #d4d4d9; border-color: #f2f2f5; }
.fi { position: absolute; left: 16px; top: 8.5px; width: 11px; height: 11px; color: #8f8f96; }
.fi.dk { color: #27272a; }
.fx { position: absolute; right: 9px; top: 50%; margin-top: -5px; width: 10px; height: 10px; color: #85858c; }
.caret { display: inline-block; width: 1px; height: 14px; background: #27272a; margin-left: .5px; }
.fld.two { flex-direction: column; align-items: flex-start; justify-content: center; font-size: 10.5px; line-height: 12px; }
.fld.two small { font-size: 6px; line-height: 8px; color: #b5b5bb; margin-bottom: 1px; }
.fld.two .caret { height: 11px; vertical-align: -2px; }
.find {
  position: absolute;
  right: 2px;
  top: 2px;
  bottom: 2px;
  width: 61px;
  border-radius: 7px;
  background: #955bff;
  color: #fff;
  font-size: 10px;
  font-weight: 500;
  display: flex;
  align-items: center;
  justify-content: center;
}
.find.ghost { background: #fdfdfe; color: #955bff; }
.find.ghost.off { color: #d9d9de; }

/* hero */
.hero {
  width: 1749px;
  height: 458px;
  margin: 63px 0 0 86px;
  padding: 12px 120px 0 119px;
  border: 4px solid #ede7fd;
  border-radius: 28px;
  background: linear-gradient(90deg, #a071f5, #c99dff);
  overflow: hidden;
}
.hero-nav {
  height: 58px;
  background: #fff;
  border-radius: 14px;
  display: flex;
  align-items: center;
  padding-left: 19px;
  font-size: 15px;
  color: #27272a;
  white-space: nowrap;
}
.logo { display: flex; align-items: center; gap: 6px; width: 177.5px; flex: none; }
.logo b { font-size: 15.5px; line-height: 12.5px; font-weight: 700; }
.hero-nav a { margin-right: 20.5px; letter-spacing: -.47px; }
.wallet {
  margin-left: auto;
  width: 149px;
  height: 38px;
  border-radius: 9px;
  background: #eee4ff;
  color: #9b6cf0;
  display: flex;
  align-items: center;
  justify-content: center;
  font-weight: 500;
  letter-spacing: -.3px;
}
.nav-sq {
  width: 37px;
  height: 38px;
  margin-left: 13px;
  border: 1px solid #f1f1f3;
  border-radius: 9px;
  display: flex;
  align-items: center;
  justify-content: center;
  font-weight: 600;
  font-size: 14px;
}
.nav-sq + .nav-sq { margin: 0 10px 0 11px; }
.crumbs { display: flex; gap: 11px; height: 68px; padding: 13px 0 0 19px; font-size: 16.5px; line-height: 20px; color: #fff; font-weight: 500; letter-spacing: -.25px; }
.crumbs span { color: rgba(255,255,255,.55); font-weight: 400; }
.crumbs b { font-weight: 500; }
.crumbs em { font-style: normal; }
.hero-search {
  height: 53px;
  background: #fff;
  border-radius: 14px;
  display: flex;
  align-items: center;
  justify-content: space-between;
  padding: 0 14px 0 19px;
  font-size: 16px;
  color: #71717a;
  letter-spacing: -.05px;
}
.hero-card { height: 198px; margin-top: 39px; background: #fbfbfb; border-radius: 28px; padding: 41px 0 0 29.5px; }
.hero-card h3 { font-size: 29.2px; line-height: 34px; font-weight: 500; color: #18181b; }
.pay-row { display: flex; margin-top: 26px; height: 59px; }
.pay-fld {
  position: relative;
  height: 59px;
  border: 1px solid #e6e0f5;
  border-radius: 14px;
  padding: 10px 0 0 18px;
  display: flex;
  flex-direction: column;
  font-size: 17px;
  line-height: 24px;
  color: #27272a;
}
.pay-fld small { font-size: 13px; line-height: 16px; color: #a1a1aa; }
.f-login { width: 434.5px; }
.f-sum { width: 338px; margin-left: 15.5px; }
.pay-x { position: absolute; left: 329px; top: 21px; color: #27272a; }
.pay-fld .caret { height: 18px; vertical-align: -3px; }
.pay-btn {
  width: 242px;
  margin-left: 19.5px;
  border-radius: 14px;
  background: #955bff;
  color: #fff;
  display: flex;
  align-items: center;
  justify-content: center;
  font-size: 16px;
  font-weight: 500;
}
.steam { position: relative; display: flex; align-items: center; margin: -9px 0 0 74px; color: #4b4b50; height: 68px; }
.steam b { font-size: 56px; font-weight: 600; letter-spacing: 2.5px; margin-left: 15px; line-height: 56px; margin-top: -6px; }
.steam sup { font-size: 12px; position: absolute; left: 284px; top: 10px; line-height: 12px; }
```

FILE: script.js

```js
const plusIc = '<svg><use href="#i-plus"/></svg>';
const markIc = '<svg class="mark"><use href="#i-plus"/></svg>';
const loadIc = '<svg><use href="#i-load"/></svg>';
const sizes = ["xs", "s", "m", "l"];

const matrixA = [
  { name: "Primary<br>Color", rows: ["pri", "pri-h", "off"] },
  { name: "Secondary<br>Color", rows: ["sec", "sec-h", "sec-off"], mark: true },
  { name: "Secondary<br>Grey", rows: ["grey", "grey-h", "grey-off"], mark: true },
  { name: "Primary<br>White", rows: ["white", "white-h", "white-off"], mark: true },
  { name: "Tertiary<br>Color", rows: ["ter", "ter-h", "ter-off"], mark: true }
];
const matrixB = [
  { name: "Primary<br>Color<br>Negative", rows: ["neg-d", "neg", "neg-off"], mark: true },
  { name: "Secondary<br>Color<br>Negative", rows: ["neg2", "neg2-h", "neg2-off"] },
  { name: "Primary<br>Color<br>Success", rows: ["suc-d", "suc", "suc-off"], mark: true },
  { name: "Secondary<br>Color<br>Success", rows: ["suc2", "suc2-h", "suc2-off"] },
  { name: "Info", rows: ["inf", "inf-h", "inf-off"] }
];
const matrixC = [
  { name: "Primary<br>Color", rows: ["pri", "pri-h2", "off"] },
  { name: "Secondary<br>Color", rows: ["sec2", "sec2-h", "sec-off"], mark: true },
  { name: "Secondary<br>Grey", rows: ["grey", "grey-h", "grey-off"], mark: true },
  { name: "Primary<br>Grey", rows: ["white", "white-h", "white-off"], mark: true },
  { name: "Tertiary<br>Color", rows: ["ter", "ter-h", "ter-off"], mark: true },
  { name: "Tertiary<br>Grey", rows: ["tg", "tg-h", "tg-off"], mark: true }
];

const verticals = [
  "pri", "pri-h", "off", "inf-v", "sec-v", "sec-v-off",
  "grey-v", "grey-v2", "off", "neg-d", "neg", "neg-off",
  "neg2", "neg2-h", "neg-off", "suc2"
];

function matrixRow(variant, mark) {
  let html = "";
  sizes.forEach(s => {
    const left = mark && s === "l" ? markIc : plusIc;
    html += `<div class="mb ${s} v-${variant}">${left}<span>Закрыть</span>${plusIc}</div>`;
  });
  sizes.forEach(s => {
    html += `<div class="mb only ${s} v-${variant}">${plusIc}</div>`;
  });
  sizes.forEach(s => {
    html += `<div class="mb spin ${s} v-${variant}">${loadIc}</div>`;
  });
  return `<div class="m-row">${html}</div>`;
}

function renderSheet(id, groups, opts) {
  const labels = groups.map(g => `
    <div class="lab-group">
      <div class="lab-name">${g.name}</div>
      <div class="lab-states"><div>Default</div><div>Hover</div><div>Disabled</div></div>
    </div>`).join("");

  const rows = groups.map(g => {
    const first = matrixRow(g.rows[0], g.mark);
    const rest = matrixRow(g.rows[1], false) + matrixRow(g.rows[2], false);
    return `<div class="m-group">${first}${rest}</div>`;
  }).join("");

  let side = "";
  if (opts.verticals) {
    const vb = verticals.map(v => `<div class="vb v-${v}">${plusIc}Button</div>`).join("");
    side += `<div class="panel-v">${vb}</div>`;
  }
  if (opts.gridRows) {
    const gb = opts.gridRows.map(r => {
      let cells = "";
      for (let i = 0; i < r.n; i++) {
        cells += `<div class="gb">${r.icon ? plusIc : ""}Button</div>`;
      }
      return `<div class="gb-row">${cells}</div>`;
    }).join("");
    side += `<div class="panel-g">${gb}</div>`;
  }

  document.getElementById(id).innerHTML = `
    <div class="sheet-in">
      <div class="sheet-head"><span>XS</span><span>S</span><span>M</span><span>L</span></div>
      <div class="sheet-body">
        <div class="labels">${labels}</div>
        <div class="panel-m">${rows}</div>
        ${side}
      </div>
    </div>`;
}

renderSheet("sheetA", matrixA, {
  verticals: true,
  gridRows: [{ n: 3, icon: true }, { n: 2, icon: true }, { n: 3 }, { n: 2 }]
});
renderSheet("sheetB", matrixB, {});
renderSheet("sheetC", matrixC, {
  verticals: true,
  gridRows: [{ n: 3, icon: true }, { n: 2, icon: true }]
});

// anatomy row
const ic = '<svg><use href="#i-plus"/></svg>';
function anatomyRows(selected) {
  function btn(n, inner, extra) {
    const sel = selected === n;
    let over = "";
    if (sel) {
      const pad = n === 1 ? 4.7 : 9.3;
      const bar = n === 1 ? 14 : 18;
      over = `<i class="pad-ov" style="left:0;width:${pad}px"></i><i class="pad-ov" style="right:0;width:${pad}px"></i>` +
        `<i class="bar-ov" style="left:${bar}px"></i><i class="bar-ov" style="right:${bar}px"></i>`;
    }
    return `<div class="ab ab${n} ${extra || ""} ${sel ? "sel" : ""}">${inner}${over}</div>`;
  }
  const label = `${ic}Закрыть${ic}`;
  return `<div class="a-row">` +
    btn(1, label) + btn(2, label) + btn(3, label) + btn(4, label) +
    btn(5, ic) + btn(6, ic) + btn(7, ic) +
    `</div><div class="a-row2">` + btn(8, ic) + btn(9, `${ic}Button`, "col") + `</div>`;
}

// numbered dots above the anatomy row
const dots = [
  [105, 25, "2", 25], [174.5, 25, "3", 21], [250, 25, "4", 19], [326, 25, "5", 14],
  [375, 25, "6", 25], [399, 25, "7", 21], [425, 25, "8", 19], [455, 25, "9", 14]
];
let anatHtml = anatomyRows(0);
dots.forEach(d => {
  anatHtml += `<i class="lead" style="left:${d[0]}px;top:${d[1]}px;width:.7px;height:${d[3]}px"></i>`;
  anatHtml += `<span class="dot" style="left:${d[0]}px;top:${d[1]}px">${d[2]}</span>`;
});
[[33, 65, "1"], [33, 80, "10"]].forEach(d => {
  anatHtml += `<i class="lead" style="left:${d[0]}px;top:${d[1]}px;width:14px;height:.7px"></i>`;
  anatHtml += `<span class="dot" style="left:${d[0]}px;top:${d[1]}px">${d[2]}</span>`;
});
document.getElementById("anatBox").innerHTML = anatHtml;

// node list on the right of the anatomy box
const nodeTail = `
  Left Icon: true<br>Change Left Icon: &lt;Instance name&gt;<br>Right Icon: true<br>
  Change Right Icon: &lt;Instance name&gt;<br>Icon: &lt;Instance name&gt;<br>Hierarchy: Primary Color<br>`;
const nodeEnd = `Type: Default<br>State: Default<br>Icon Only: Off<br>Loading: Off`;
let nodes = `<div class="node" style="margin-bottom:5px">
  <span class="node-dot" style="top:1px">1</span>
  <div class="node-head" style="height:10px;margin-left:-1px"><svg width="6" height="6" viewBox="0 0 6 6"><path d="M2 0v6M4 0v6M0 2h6M0 4h6" stroke="#999" stroke-width=".5"/></svg>Frame 2087327074</div>
  <div>Width: 995</div>
</div>`;
["XS", "S", "M", "L"].forEach((s, i) => {
  nodes += `<div class="node">
    <span class="node-dot">${i + 2}</span>
    <div class="node-head"><i></i>&nbsp;Button / Horizontal</div>
    Depends on: <b>Button / Horizontal</b><br>${nodeTail}Size: ${s}<br>${nodeEnd}
  </div>`;
});
document.getElementById("nodeList").innerHTML = nodes;

// layout boxes: ghost copies of the row with one node measured
function tag(cls, x, y, text) {
  return `<span class="tag ${cls}" style="left:${x}px;top:${y}px">${text}</span>`;
}
function gap(x, y, w, h, cls) {
  return `<i class="ov-gap ${cls || ""}" style="left:${x}px;top:${y}px;width:${w}px;height:${h}px"></i>`;
}

let boxA = `<div class="ghost-btns">${anatomyRows(0)}</div><i class="ov-blue"></i><i class="ov-bar"></i>`;
[[101, 50, 10], [177, 46.6, 9], [253, 43.4, 9.6], [351, 50, 9], [377, 46.6, 9], [405, 43.4, 8]].forEach(g => {
  boxA += gap(g[0], g[1], g[2], 63 - g[1]);
});
boxA += gap(101, 34, 10, 16, "ov-up") + tag("or", 101, 25.5, "34") + tag("or", 31, 62, "34");
document.getElementById("layoutA").innerHTML = boxA;

document.getElementById("layoutB").innerHTML = `<div class="ghost-btns">${anatomyRows(1)}</div>` +
  tag("gr", 45.7, 36.7, "12") + tag("or", 58.7, 36.7, "8") + tag("or", 81, 36.7, "8") + tag("gr", 94.3, 36.7, "12");
document.getElementById("layoutC").innerHTML = `<div class="ghost-btns">${anatomyRows(2)}</div>` +
  tag("gr", 111, 33.8, "24") + tag("or", 126, 33.8, "8") + tag("or", 152, 33.8, "8") + tag("gr", 167.7, 33.8, "24");
document.getElementById("layoutD").innerHTML = `<div class="ghost-btns">${anatomyRows(3)}</div>` +
  tag("gr", 186.7, 30, "24") + tag("or", 202.3, 30, "8") + tag("or", 228, 30, "8") + tag("gr", 243.7, 30, "24");
```
